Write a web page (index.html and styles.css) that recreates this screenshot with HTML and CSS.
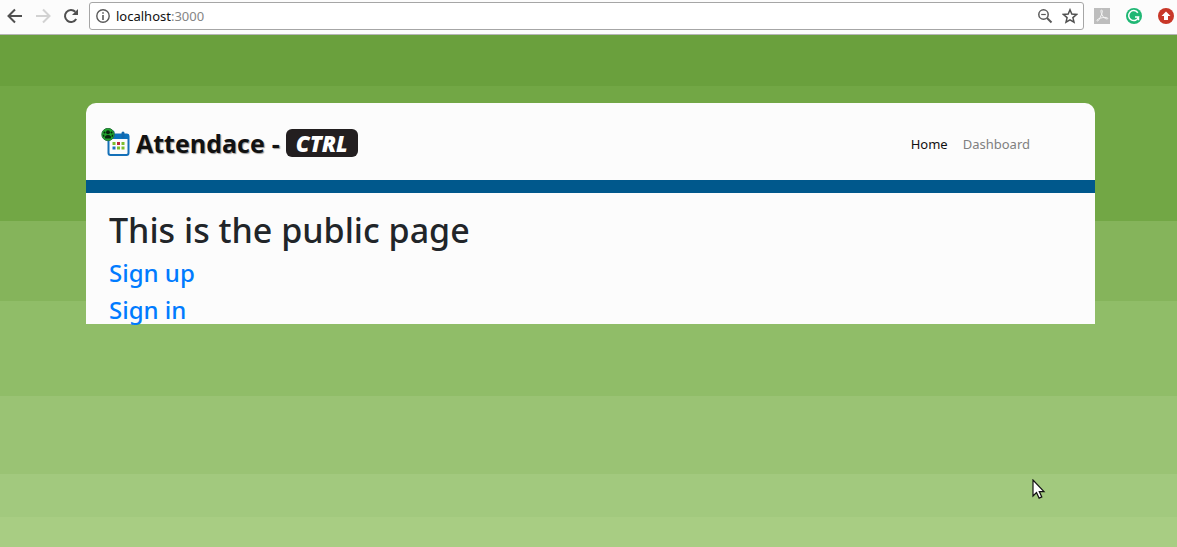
FILE: index.html
```html
<!DOCTYPE html>
<html lang="en">
<head>
<meta charset="utf-8">
<title>Attendace - CTRL</title>
<link rel="stylesheet" href="styles.css">
</head>
<body>
<div class="toolbar">
  <button class="tool" aria-label="Back"><svg width="16" height="16" viewBox="0 0 16 16" fill="none" stroke="#505050" stroke-width="2"><path d="M15 8H2M8 1.500 1.500 8 8 14.500"/></svg></button>
  <button class="tool" aria-label="Forward"><svg width="16" height="16" viewBox="0 0 16 16" fill="none" stroke="#d2d2d2" stroke-width="2"><path d="M1 8h13M8 1.500 14.500 8 8 14.500"/></svg></button>
  <button class="tool" aria-label="Reload"><svg width="16" height="16" viewBox="0 0 16 16"><path d="M13.200 11A6 6 0 1 1 12.300 3.800" fill="none" stroke="#505050" stroke-width="2"/><path d="M15 1v6H9z" fill="#505050"/></svg></button>
  <div class="address">
    <svg width="14" height="14" viewBox="0 0 14 14"><circle cx="7" cy="7" r="6.200" fill="none" stroke="#5a5a5a" stroke-width="1.400"/><path d="M6.200 3.200h1.600v1.600H6.200zM6.200 6h1.600v5H6.200z" fill="#5a5a5a"/></svg>
    <div class="url">localhost<span class="port">:3000</span></div>
    <button class="tool" aria-label="Zoom"><svg width="16" height="16" viewBox="0 0 16 16" fill="none" stroke="#5a5a5a"><circle cx="6.500" cy="6.500" r="4.700" stroke-width="1.500"/><path d="M10 10l4.500 4.500" stroke-width="2"/><path d="M4.200 6.500h4.600" stroke-width="1.200"/></svg></button>
    <button class="tool" aria-label="Bookmark"><svg width="16" height="16" viewBox="0 0 16 16"><path d="M8 1.800l1.800 4.300 4.700.4-3.600 3.100 1.100 4.600L8 11.800l-4 2.400 1.100-4.600L1.500 6.500l4.700-.4z" fill="none" stroke="#505050" stroke-width="1.500"/></svg></button>
  </div>
  <div class="extensions">
    <button class="tool" aria-label="PDF"><svg width="16" height="16" viewBox="0 0 16 16"><path d="M0 0h16v16H0z" fill="#bdbdbd"/><path d="M7.500 2c-1 0-.6 2.500.3 4.400C9 9 11 10.800 13 11c1.500 0 1-1.700-2-1.600-3 .1-6.500 1-7.800 2.400-.9 1.300.8 2 2-.4C6.500 9 8.500 5 8.300 3 8.200 2.300 8 2 7.500 2z" fill="none" stroke="#f5f5f5"/></svg></button>
    <button class="tool" aria-label="Grammar"><svg width="16" height="16" viewBox="0 0 16 16"><circle cx="8" cy="8" r="8" fill="#1fb774"/><path d="M11.800 4.700A5 5 0 1 0 12.500 9H9M12.500 8.500v3.700" fill="none" stroke="#fff" stroke-width="1.500"/></svg></button>
    <button class="tool" aria-label="Upload"><svg width="16" height="16" viewBox="0 0 16 16"><circle cx="8" cy="8" r="8" fill="#c83728"/><path d="M8 3.500 12.500 8H10v4H6V8H3.500z" fill="#fff"/></svg></button>
  </div>
</div>
<main class="page">
  <div class="card">
    <header class="header">
      <a class="brand" href="#">
        <svg width="29" height="31" viewBox="0 0 29 31">
          <rect x="7.500" y="6.500" width="20" height="20.500" rx="2" fill="#fcfcfc" stroke="#1470b8" stroke-width="2"/>
          <path d="M7.500 6h20v5h-20z" fill="#0c72be"/>
          <path d="M12 4v4M22 5v4" stroke="#1268ad" stroke-width="3" stroke-linecap="round"/>
          <path d="M11.500 14h3v3h-3zM20.500 14h3v3h-3zM16 18.500h3v3h-3zM20.500 18.500h3v3h-3z" fill="#7cbd2d"/>
          <path d="M16 14h3v3h-3z" fill="#bf263b"/><path d="M11.500 18.500h3v3h-3z" fill="#1b70be"/>
          <circle cx="7" cy="6.500" r="6.200" fill="#20a52d" stroke="#28763c"/>
          <g fill="#08250e"><circle cx="7" cy="4.200" r="2"/><circle cx="3.500" cy="4.500" r="1"/><circle cx="10.500" cy="4.500" r="1"/><path d="M4.200 10.500q-1-3.500 2.800-3.500t2.800 3.500zM1.800 6.800h1.500v2.200H2.500zM10.700 6.800h1.500l-.7 2.200h-.8z"/></g>
        </svg>
        <span class="brand-name"><span>Attendace</span> <span>-</span></span>
        <span class="badge">CTRL</span>
      </a>
      <nav class="nav"><a class="nav-link current" href="#">Home</a><a class="nav-link" href="#">Dashboard</a></nav>
    </header>
    <section class="content">
      <h1 class="title">This is the public page</h1>
      <a class="action" href="#">Sign up</a>
      <a class="action" href="#">Sign in</a>
    </section>
  </div>
</main>
<svg class="pointer" width="14" height="21" viewBox="0 0 14 21" aria-hidden="true"><path d="M1 1v16l3.500-3.400 2.600 5.500 2.700-1.200-2.500-5.300H12z" fill="#fff" stroke="#111" stroke-width="1.200"/></svg>
</body>
</html>
```
FILE: styles.css
```css
* { box-sizing: border-box; }
body {
  margin: 0;
  min-height: 100vh;
  display: flex;
  flex-direction: column;
  font-family: "Noto Sans", "Open Sans", sans-serif;
  color: #212529;
}
a { text-decoration: none; }
.toolbar {
  display: flex;
  align-items: center;
  gap: 12px;
  height: 35px;
  padding: 0 3px 3px 7px;
  background: #fcfcfc;
  border-bottom: 1px solid #b5b5b5;
}
.tool {
  display: flex;
  flex: none;
  padding: 0;
  border: 0;
  background: none;
}
.address {
  flex: 1;
  display: flex;
  align-items: center;
  gap: 9px;
  height: 28px;
  margin-left: -2px;
  padding: 0 5px 0 6px;
  border: 1px solid #a6a6a6;
  border-radius: 3px;
  background: #fff;
}
.url {
  flex: 1;
  margin-left: -3px;
  font-size: 13px;
  color: #111;
}
.port { color: #858585; }
.extensions { display: flex; gap: 16px; margin-left: -2px; }
.page {
  flex: 1;
  padding: 68px 82px 68px 86px;
  background: linear-gradient(#6aa03d 51px, #72a745 51px 186px, #85b45b 186px 266px, #90bd68 266px 361px, #9ac374 361px 439px, #a2c97e 439px 482px, #a8cd83 482px);
}
.card {
  background: #fcfcfc;
  border-radius: 10px 10px 0 0;
}
.header {
  display: flex;
  align-items: center;
  justify-content: space-between;
  height: 90px;
  padding: 3px 65px 0 15px;
  border-bottom: 13px solid #00588c;
}
.brand { display: flex; align-items: center; color: #111; }
.brand-name {
  display: flex;
  gap: 7px;
  margin: 0 6px 0 6px;
  font-family: "Open Sans", sans-serif;
  font-size: 25px;
  line-height: 30px;
  font-weight: 700;
  text-shadow: 1px 1px 1px #999;
}
.badge {
  width: 72px;
  border-radius: 6px;
  background: #231f20;
  color: #fff;
  font-family: "Open Sans", sans-serif;
  font-size: 22px;
  line-height: 28px;
  font-weight: 800;
  font-style: italic;
  text-align: center;
}
.nav {
  display: flex;
  gap: 15px;
  padding-top: 1px;
  font-size: 13px;
}
.nav-link { color: #808080; }
.current { color: #111; }
.content {
  display: flex;
  flex-direction: column;
  align-items: flex-start;
  gap: 9px;
  padding: 17px 23px 0;
}
.title { margin: 0; font-size: 34px; line-height: 40px; font-weight: 500; }
.action { font-size: 24px; line-height: 28px; font-weight: 500; color: #007bff; }
.pointer { position: absolute; left: 1032px; top: 479px; }
```
